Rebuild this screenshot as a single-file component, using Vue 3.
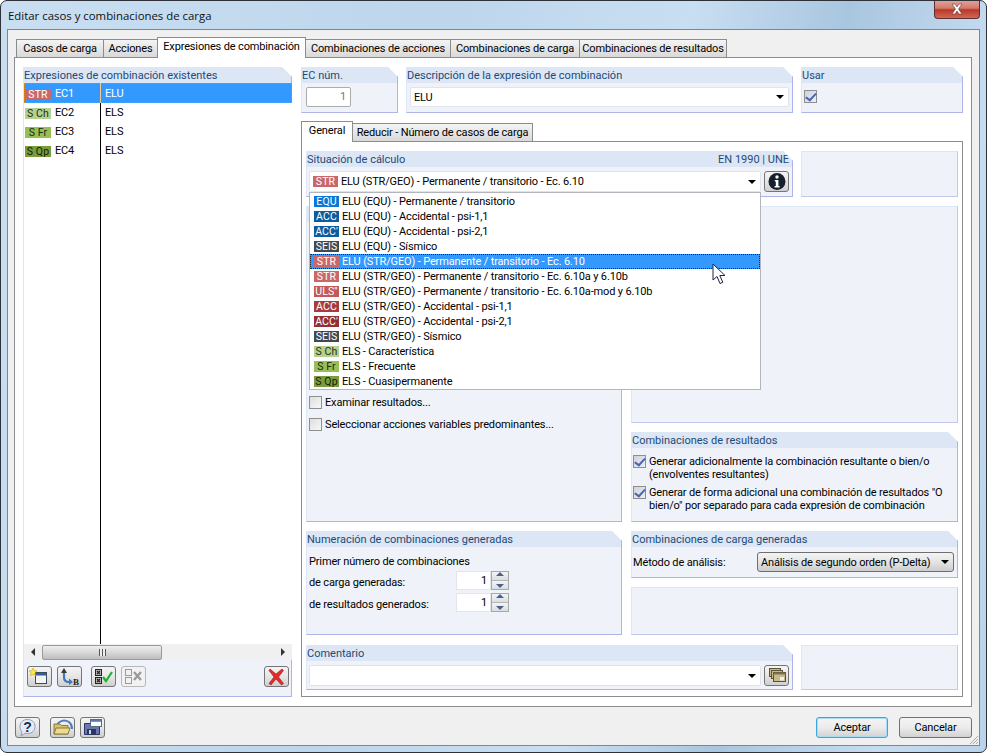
<script setup>
const tabs = ['Casos de carga', 'Acciones', 'Expresiones de combinación', 'Combinaciones de acciones', 'Combinaciones de carga', 'Combinaciones de resultados']

const expressions = [
  { tag: 'STR', cls: 'b-str', id: 'EC1', text: 'ELU', selected: true },
  { tag: 'S Ch', cls: 'b-sch', id: 'EC2', text: 'ELS' },
  { tag: 'S Fr', cls: 'b-sfr', id: 'EC3', text: 'ELS' },
  { tag: 'S Qp', cls: 'b-sqp', id: 'EC4', text: 'ELS' },
]

const situations = [
  { tag: 'EQU', cls: 'b-equ', text: 'ELU (EQU) - Permanente / transitorio' },
  { tag: 'ACC', cls: 'b-acc', text: 'ELU (EQU) - Accidental - psi-1,1' },
  { tag: "ACC'", cls: 'b-acc', text: 'ELU (EQU) - Accidental - psi-2,1' },
  { tag: 'SEIS', cls: 'b-seis', text: 'ELU (EQU) - Sísmico' },
  { tag: 'STR', cls: 'b-str', text: 'ELU (STR/GEO) - Permanente / transitorio - Ec. 6.10', selected: true },
  { tag: 'STR', cls: 'b-str', text: 'ELU (STR/GEO) - Permanente / transitorio - Ec. 6.10a y 6.10b' },
  { tag: "ULS''", cls: 'b-uls', text: 'ELU (STR/GEO) - Permanente / transitorio - Ec. 6.10a-mod y 6.10b' },
  { tag: 'ACC', cls: 'b-accr', text: 'ELU (STR/GEO) - Accidental - psi-1,1' },
  { tag: "ACC'", cls: 'b-accd', text: 'ELU (STR/GEO) - Accidental - psi-2,1' },
  { tag: 'SEIS', cls: 'b-seis', text: 'ELU (STR/GEO) - Sísmico' },
  { tag: 'S Ch', cls: 'b-sch', text: 'ELS - Característica' },
  { tag: 'S Fr', cls: 'b-sfr', text: 'ELS - Frecuente' },
  { tag: 'S Qp', cls: 'b-sqp', text: 'ELS - Cuasipermanente' },
]
</script>

<template>
  <div class="window">
    <div class="titlebar">
      <span class="title">Editar casos y combinaciones de carga</span>
      <button class="close">
        <svg width="16" height="12" viewBox="0 0 16 12">
          <path d="M3 1h3l2 3 2-3h3l-3.500 5 3.500 5h-3l-2-3-2 3h-3l3.500-5z" fill="#fff" stroke="#5a3a3a" stroke-width="0.6" />
        </svg>
      </button>
    </div>

    <div class="client">
      <div class="tabs">
        <div v-for="(t, i) in tabs" :key="t" class="tab" :class="{ active: i === 2 }">{{ t }}</div>
      </div>

      <div class="panel">
        <!-- left list -->
        <section class="group list-group">
          <div class="group-head">Expresiones de combinación existentes</div>
          <div class="list">
            <div v-for="e in expressions" :key="e.id" class="list-row" :class="{ selected: e.selected }">
              <div class="list-cell-a">
                <span class="badge" :class="e.cls">{{ e.tag }}</span>
                <span>{{ e.id }}</span>
              </div>
              <div class="list-cell-b">{{ e.text }}</div>
            </div>
          </div>
          <div class="hscroll">
            <span class="arrow-l"></span>
            <div class="thumb"><span class="grip"></span></div>
            <span class="arrow-r"></span>
          </div>
          <div class="list-tools">
            <button class="tool">
              <svg width="23" height="19" viewBox="0 0 23 19">
                <rect x="7.500" y="5.500" width="11" height="11" fill="#f2f4f6" stroke="#3d4a5a" />
                <rect x="8" y="6" width="10" height="2.500" fill="#2f5f9f" />
                <path d="M5 1l1.200 2.600 2.800.3-2.100 1.900.6 2.800L5 7.200 2.500 8.600l.6-2.800L1 3.900l2.800-.3z" fill="#ffe93c" stroke="#c8a820" stroke-width="0.6" />
              </svg>
            </button>
            <button class="tool">
              <svg width="23" height="19" viewBox="0 0 23 19">
                <path d="M6 1l-3 5h6z" fill="#3a3a3a" />
                <path d="M6 6v4c0 3 2 5 5 5h1" fill="none" stroke="#3f78c0" stroke-width="2.200" />
                <path d="M11 11.500l4 3.500-4 3z" fill="#3f78c0" />
                <text x="15" y="18" class="icon-b">B</text>
              </svg>
            </button>
            <button class="tool tool-gap">
              <svg width="23" height="19" viewBox="0 0 23 19">
                <rect x="3.500" y="2.500" width="6" height="6" fill="#b8b8b8" stroke="#222" />
                <rect x="3.500" y="10.500" width="6" height="6" fill="#b8b8b8" stroke="#222" />
                <path d="M5 4l3 3M8 4l-3 3M5 12l3 3M8 12l-3 3" stroke="#222" stroke-width="1.200" />
                <path d="M11 10l3 4 6-9" fill="none" stroke="#22b033" stroke-width="2.200" />
              </svg>
            </button>
            <button class="tool disabled">
              <svg width="23" height="19" viewBox="0 0 23 19">
                <rect x="3.500" y="2.500" width="6" height="6" fill="none" stroke="#9a9a9a" />
                <rect x="3.500" y="10.500" width="6" height="6" fill="none" stroke="#9a9a9a" />
                <path d="M12 5l7 8M19 5l-7 8" fill="none" stroke="#9a9a9a" stroke-width="2.400" />
              </svg>
            </button>
            <button class="tool tool-end">
              <svg width="23" height="19" viewBox="0 0 23 19">
                <path d="M5 2l6 5 6-5 1.500 1.500-5 6.500 5 6.500-2 1.500-5.500-6-5 6-2-1.500 5-6.500-5-6.500z" fill="#e62a2a" stroke="#8a2020" stroke-width="0.6" />
              </svg>
            </button>
          </div>
        </section>

        <!-- right side -->
        <div class="right">
          <div class="top-row">
            <section class="group">
              <div class="group-head">EC núm.</div>
              <div class="group-body"><div class="num-input">1</div></div>
            </section>
            <section class="group">
              <div class="group-head">Descripción de la expresión de combinación</div>
              <div class="group-body desc-body">
                <div class="combo">ELU<span class="caret"></span></div>
              </div>
            </section>
            <section class="group">
              <div class="group-head">Usar</div>
              <div class="group-body use-body">
                <span class="check on"></span>
              </div>
            </section>
          </div>

          <div class="inner-tabs">
            <div class="inner-tab active">General</div>
            <div class="inner-tab">Reducir - Número de casos de carga</div>
          </div>

          <div class="inner-panel">
            <div class="row-wide">
              <section class="group group-open">
                <div class="group-head head-split"><span>Situación de cálculo</span><span>EN 1990 | UNE</span></div>
                <div class="group-body combo-body">
                  <div class="combo combo-grow">
                    <span class="badge b-str">STR</span>
                    <span class="combo-text">ELU (STR/GEO) - Permanente / transitorio - Ec. 6.10</span>
                    <span class="caret"></span>
                    <ul class="dropdown">
                      <li v-for="s in situations" :key="s.text + s.tag" class="option" :class="{ selected: s.selected }">
                        <span class="badge" :class="s.cls">{{ s.tag }}</span>
                        <span>{{ s.text }}</span>
                      </li>
                    </ul>
                  </div>
                  <button class="tool info">
                    <svg width="20" height="19" viewBox="0 0 20 19">
                      <circle cx="10" cy="9.500" r="8.500" fill="#16202c" />
                      <circle cx="10" cy="5" r="1.700" fill="#fff" />
                      <path d="M7.800 8h3.600v6h1.200v1.500H7.600V14h1.200V9.500h-1z" fill="#fff" />
                    </svg>
                  </button>
                </div>
              </section>
              <div class="blank"></div>
            </div>

            <div class="row-mid">
              <section class="group options">
                <div class="group-head"></div>
                <div class="options-body">
                  <label class="check-line"><span class="check"></span>Examinar resultados...</label>
                  <label class="check-line"><span class="check"></span>Seleccionar acciones variables predominantes...</label>
                </div>
              </section>
              <div class="stack">
                <div class="blank grow"></div>
                <section class="group results">
                  <div class="group-head">Combinaciones de resultados</div>
                  <div class="results-body">
                    <div class="multi"><span class="check on"></span><span>Generar adicionalmente la combinación resultante o bien/o<br>(envolventes resultantes)</span></div>
                    <div class="multi"><span class="check on"></span><span>Generar de forma adicional una combinación de resultados "O<br>bien/o" por separado para cada expresión de combinación</span></div>
                  </div>
                </section>
              </div>
            </div>

            <div class="row-low">
              <section class="group">
                <div class="group-head">Numeración de combinaciones generadas</div>
                <div class="numbering">
                  <div class="num-line first">Primer número de combinaciones</div>
                  <div class="num-line">
                    <span>de carga generadas:</span>
                    <div class="spin"><span class="spin-val">1</span><span class="spin-btns"><i class="up"></i><i class="down"></i></span></div>
                  </div>
                  <div class="num-line">
                    <span>de resultados generados:</span>
                    <div class="spin"><span class="spin-val">1</span><span class="spin-btns"><i class="up"></i><i class="down"></i></span></div>
                  </div>
                </div>
              </section>
              <div class="stack">
                <section class="group generated">
                  <div class="group-head">Combinaciones de carga generadas</div>
                  <div class="generated-body">
                    <span>Método de análisis:</span>
                    <div class="gray-select">Análisis de segundo orden (P-Delta)<span class="caret"></span></div>
                  </div>
                </section>
                <div class="blank grow"></div>
              </div>
            </div>

            <div class="row-wide row-comment">
              <section class="group">
                <div class="group-head">Comentario</div>
                <div class="group-body combo-body">
                  <div class="combo combo-grow"><span class="caret"></span></div>
                  <button class="tool info">
                    <svg width="20" height="17" viewBox="0 0 20 17">
                      <g fill="#c8b987" stroke="#5c5238">
                        <rect x="2.500" y="1.500" width="11" height="8" />
                        <rect x="4.500" y="3.500" width="11" height="8" />
                        <rect x="6.500" y="5.500" width="12" height="9" />
                      </g>
                      <path d="M6.500 5.500h12v2h-12z" fill="#7d7350" />
                      <rect x="13" y="10" width="4" height="3.500" fill="#eef0f2" />
                    </svg>
                  </button>
                </div>
              </section>
              <div class="blank"></div>
            </div>
          </div>
        </div>
      </div>

      <div class="footer">
        <button class="tool foot-tool">
          <svg width="23" height="19" viewBox="0 0 23 19">
            <path d="M11.500 1.500c4.500 0 7.500 3 7.500 7s-3 7-7.500 7c-.8 0-1.500-.1-2.200-.3L5 18l1-4.200C4.700 12.400 4 10.600 4 8.500c0-4 3-7 7.500-7z" fill="#e4ecf7" stroke="#8b9cb8" />
            <text x="11.500" y="13.500" class="icon-q">?</text>
          </svg>
        </button>
        <button class="tool foot-tool">
          <svg width="23" height="19" viewBox="0 0 23 19">
            <path d="M6 7C8 3 13 1 18 4c2 1.500 3 4 3 7" fill="none" stroke="#4e7eb8" stroke-width="2" />
            <path d="M3 6h6l1.500 1.500H17V16H3z" fill="#d8c26a" stroke="#8a7a3c" />
            <path d="M3 16l2-6h14l-2 6z" fill="#ecdb91" stroke="#8a7a3c" />
          </svg>
        </button>
        <button class="tool foot-tool">
          <svg width="23" height="19" viewBox="0 0 23 19">
            <path d="M3.500 5.500h13l2 2v9h-15z" fill="#6a78b0" stroke="#2c3560" />
            <rect x="6" y="11" width="9" height="5.500" fill="#2c3560" />
            <rect x="8" y="12" width="2" height="4" fill="#cfd6e6" />
            <rect x="9.500" y="1.500" width="11" height="7" fill="#fff" stroke="#5a6a8a" />
            <rect x="10" y="2" width="10" height="1.800" fill="#5a7ab0" />
          </svg>
        </button>
        <div class="foot-spacer"></div>
        <button class="dlg-btn default">Aceptar</button>
        <button class="dlg-btn">Cancelar</button>
      </div>
      <svg class="grip-corner" width="11" height="11" viewBox="0 0 11 11">
        <path d="M10 2L2 10M10 5L5 10M10 8L8 10" stroke="#a8a8a8" stroke-width="1" />
      </svg>
    </div>

    <svg class="cursor" width="14" height="22" viewBox="0 0 14 22">
      <path d="M1 1v16l4-3.500 3 7 2.800-1.200-3-6.800h5.200z" fill="#fff" stroke="#1c2240" stroke-width="1" />
    </svg>
  </div>
</template>

<style scoped>
.window {
  position: relative;
  box-sizing: border-box;
  width: 987px;
  height: 753px;
  display: flex;
  flex-direction: column;
  padding: 0 6px 6px;
  border: 1px solid #2e3238;
  border-radius: 7px;
  background: linear-gradient(100deg, #c9def1 0%, #bdd6ec 40%, #c8def2 62%, #a9c6e0 76%, #c6dcf1 90%, #b9d3ea 100%);
  font-family: Roboto, "Liberation Sans", Arial, sans-serif;
  font-size: 11px;
  letter-spacing: -0.15px;
  color: #000;
  overflow: hidden;
}

.titlebar {
  height: 28px;
  flex: none;
  display: flex;
  justify-content: space-between;
}

.title {
  font-family: "Open Sans", "Liberation Sans", sans-serif;
  font-size: 11.400px;
  letter-spacing: 0;
  padding-left: 1px;
  line-height: 29px;
  color: #111;
}

.close {
  width: 46px;
  height: 19px;
  margin: -1px 0 0;
  padding: 0;
  display: flex;
  align-items: center;
  justify-content: center;
  border: 1px solid #5e3030;
  border-top: none;
  border-radius: 0 0 4px 4px;
  background: linear-gradient(#e2a59c 0%, #d47a6c 45%, #b8382a 55%, #cf6a52 100%);
}

.client {
  position: relative;
  flex: 1;
  min-height: 0;
  display: flex;
  flex-direction: column;
  padding: 7px 7px 0 6px;
  background: #f0f0f0;
  border: 1px solid #7c8794;
}

.tabs {
  display: grid;
  grid-template-columns: 87px 54px 148px 145px 129px 147px;
  justify-content: start;
  height: 20px;
  padding-left: 2px;
  align-items: end;
  position: relative;
  z-index: 1;
}

.tab {
  box-sizing: border-box;
  height: 18px;
  line-height: 18px;
  text-align: center;
  white-space: nowrap;
  border: 1px solid #8c8c8c;
  border-bottom: none;
  margin-right: -1px;
  background: linear-gradient(#f4f4f4, #d9d9d9);
}

.tab.active {
  height: 21px;
  margin-bottom: -1px;
  line-height: 18px;
  padding-bottom: 3px;
  background: #fff;
  position: relative;
  z-index: 2;
}

.panel {
  flex: none;
  box-sizing: border-box;
  height: 650px;
  display: grid;
  grid-template-columns: 269px 662px;
  gap: 9px;
  padding: 9px 7px 10px 8px;
  background: #fff;
  border: 1px solid #8c8c8c;
}

/* titled boxes with the cut corner; the box itself is a pseudo so the dropdown is not clipped */
.group {
  position: relative;
  isolation: isolate;
  box-sizing: border-box;
  display: flex;
  flex-direction: column;
  min-width: 0;
  padding: 0 1px 1px;
}

.group::before {
  content: "";
  position: absolute;
  inset: 0;
  z-index: -1;
  box-sizing: border-box;
  background: #eff3f9;
  border-left: 1px solid #dce6f4;
  border-right: 1px solid #aeb4e8;
  border-bottom: 1px solid #aeb4e8;
  clip-path: polygon(0 0, calc(100% - 10px) 0, 100% 10px, 100% 100%, 0 100%);
}

.group-open {
  z-index: 3;
}

.group-head {
  flex: none;
  height: 16px;
  line-height: 17px;
  padding: 0 4px 0 1px;
  margin: 0 -1px;
  background: #dce6f4;
  color: #1d4a78;
  letter-spacing: 0;
  white-space: nowrap;
  box-shadow: inset -1px 0 0 #aeb4e8;
  clip-path: polygon(0 0, calc(100% - 10px) 0, 100% 10px, 100% 100%, 0 100%);
}

.head-split {
  display: flex;
  justify-content: space-between;
}

.group-body {
  flex: 1;
  padding: 4px 3px;
}

.blank {
  box-sizing: border-box;
  background: #eff3f9;
  border: 1px solid #dce6f4;
  border-right-color: #c3c8ee;
  border-bottom-color: #c3c8ee;
}

.grow {
  flex: 1;
}

.badge {
  display: inline-block;
  box-sizing: border-box;
  width: 25px;
  height: 11px;
  line-height: 11px;
  margin-right: 3px;
  font-size: 10.500px;
  letter-spacing: 0.1px;
  text-align: center;
  white-space: nowrap;
  color: #fff;
  flex: none;
}

.b-str { background: #c9686b; }
.b-equ { background: #0a78d8; }
.b-acc { background: #0d5c9e; }
.b-seis { background: #42494f; }
.b-uls { background: #c25a5a; }
.b-accr { background: #a63c40; }
.b-accd { background: #923037; }
.b-sch { background: #b6d18f; color: #243018; }
.b-sfr { background: #97bf55; color: #1d2a0c; }
.b-sqp { background: #7b9c3c; color: #141d06; }

/* left list */
.list {
  flex: 1;
  min-height: 0;
  margin-right: -1px;
  background: linear-gradient(#000, #000) 76px 0 / 1px 100% no-repeat #fff;
}

.list-row {
  display: flex;
  height: 19px;
  line-height: 20px;
}

.list-row.selected {
  box-sizing: border-box;
  height: 20px;
  line-height: 22px;
  background: #3399ff;
  color: #fff;
  outline: 1px dotted #d98a20;
  outline-offset: -1px;
}

.list-cell-a {
  width: 76px;
  height: 20px;
  flex: none;
  display: flex;
  align-items: center;
  padding-left: 1px;
  box-sizing: border-box;
}

.selected .list-cell-a {
  height: 22px;
}

.list-cell-a .badge {
  width: 26px;
  margin-right: 4px;
}

.list-cell-b {
  padding-left: 4px;
  border-left: 1px solid transparent;
}

.list-row.selected .list-cell-b {
  border-left-color: #f0c890;
}

.hscroll {
  flex: none;
  height: 16px;
  margin-right: -1px;
  display: flex;
  align-items: center;
  background: #f0f0f0;
}

.arrow-l {
  margin-left: 7px;
  border: 4px solid transparent;
  border-left: none;
  border-right-color: #333;
}

.arrow-r {
  margin-left: auto;
  margin-right: 7px;
  border: 4px solid transparent;
  border-right: none;
  border-left-color: #333;
}

.thumb {
  box-sizing: border-box;
  width: 120px;
  height: 15px;
  margin-left: 7px;
  display: flex;
  align-items: center;
  justify-content: center;
  border: 1px solid #9a9a9a;
  border-radius: 2px;
  background: linear-gradient(#eeeeee, #d8d8d8 50%, #bdbdbd);
}

.grip {
  width: 7px;
  height: 7px;
  background: repeating-linear-gradient(90deg, #555 0 1px, #eee 1px 3px);
}

.list-tools {
  flex: none;
  height: 30px;
  display: flex;
  align-items: flex-start;
  gap: 5px;
  padding: 6px 2px 0 3px;
}

.tool {
  box-sizing: border-box;
  flex: none;
  width: 25px;
  height: 21px;
  padding: 0;
  display: flex;
  align-items: center;
  justify-content: center;
  border: 1px solid #757575;
  border-radius: 3px;
  background: linear-gradient(#f4f4f4, #e6e6e6 50%, #cfcfcf);
}

.tool.disabled {
  border-color: #b8b8b8;
  background: #f2f2f2;
}

.tool-gap {
  margin-left: 4px;
}

.tool-end {
  margin-left: auto;
}

.icon-b {
  font-family: "Liberation Serif", serif;
  font-size: 9px;
  font-weight: bold;
  fill: #222;
}

.icon-q {
  font-family: "Liberation Sans", sans-serif;
  font-size: 14px;
  font-weight: bold;
  text-anchor: middle;
  fill: #1d2b55;
}

/* right column */
.right {
  display: flex;
  flex-direction: column;
  min-width: 0;
}

.top-row {
  flex: none;
  display: grid;
  grid-template-columns: 97px 387px 162px;
  gap: 8px;
  height: 46px;
}

.num-input {
  box-sizing: border-box;
  width: 45px;
  height: 20px;
  margin-left: 1px;
  line-height: 18px;
  padding-right: 4px;
  text-align: right;
  color: #777;
  background: #fff;
  border: 1px solid #ababab;
  border-radius: 2px;
}

.desc-body {
  padding: 4px 3px 0;
}

.use-body {
  padding: 7px 2px 0;
}

.combo {
  position: relative;
  box-sizing: border-box;
  height: 20px;
  line-height: 19px;
  padding-left: 3px;
  display: flex;
  align-items: center;
  background: #fff;
  border: 1px solid #dfe3ea;
  border-radius: 2px;
}

.caret {
  margin-left: auto;
  margin-right: 4px;
  width: 0;
  height: 0;
  border: 4px solid transparent;
  border-top: 4px solid #000;
  border-bottom: none;
  flex: none;
}

.check {
  box-sizing: border-box;
  display: inline-block;
  position: relative;
  flex: none;
  width: 13px;
  height: 13px;
  border: 1px solid #8e8f8f;
  background: linear-gradient(135deg, #dedede, #f8f8f8);
}

.check.on {
  background: linear-gradient(135deg, #cfd3da, #eceef2);
}

.check.on::after {
  content: "";
  position: absolute;
  left: 3px;
  top: 0;
  width: 4px;
  height: 8px;
  border-right: 2px solid #4a64b4;
  border-bottom: 2px solid #4a64b4;
  transform: rotate(35deg) skewX(-8deg);
}

.inner-tabs {
  flex: none;
  display: flex;
  align-items: flex-end;
  height: 20px;
  margin-top: 8px;
  position: relative;
  z-index: 1;
}

.inner-tab {
  box-sizing: border-box;
  height: 18px;
  line-height: 18px;
  padding: 0 3px;
  width: 181px;
  text-align: center;
  white-space: nowrap;
  border: 1px solid #8c8c8c;
  border-bottom: none;
  background: linear-gradient(#f4f4f4, #d9d9d9);
}

.inner-tab.active {
  width: 52px;
  height: 21px;
  margin-bottom: -1px;
  margin-right: -1px;
  line-height: 18px;
  padding-bottom: 3px;
  background: #fff;
}

.inner-panel {
  flex: 1;
  min-height: 0;
  box-sizing: border-box;
  display: flex;
  flex-direction: column;
  gap: 9px;
  padding: 9px 4px 6px 4px;
  border: 1px solid #8c8c8c;
}

.row-wide {
  flex: none;
  height: 46px;
  display: grid;
  grid-template-columns: 487px 157px;
  gap: 8px;
}

.row-comment {
  height: 45px;
  margin-top: 1px;
}

.combo-body {
  display: flex;
  gap: 3px;
  padding: 4px 3px 0 2px;
}

.combo-grow {
  flex: 1;
  height: 21px;
}

.combo-text {
  white-space: nowrap;
}

.info {
  width: 25px;
}

.dropdown {
  position: absolute;
  left: -1px;
  right: -1px;
  top: 20px;
  z-index: 5;
  margin: 0;
  padding: 1px 0 0;
  list-style: none;
  background: #fff;
  border: 1px solid #b4b4bc;
}

.option {
  display: flex;
  align-items: center;
  height: 15px;
  padding-left: 4px;
  white-space: nowrap;
}

.option.selected {
  background: #3399ff;
  color: #fff;
  outline: 1px dotted #222;
  outline-offset: -1px;
}

.row-mid {
  flex: none;
  height: 316px;
  display: grid;
  grid-template-columns: 316px 327px;
  gap: 9px;
}

.stack {
  display: flex;
  flex-direction: column;
  gap: 9px;
  min-width: 0;
}

.options-body {
  padding: 174px 2px 0;
  display: flex;
  flex-direction: column;
  gap: 9px;
}

.check-line {
  display: flex;
  align-items: center;
  gap: 3px;
  height: 13px;
}

.results {
  flex: none;
  height: 90px;
}

.results-body {
  padding: 7px 1px 0;
  display: flex;
  flex-direction: column;
  gap: 5px;
  line-height: 13px;
}

.multi {
  display: flex;
  gap: 3px;
  white-space: nowrap;
}

.row-low {
  flex: none;
  height: 104px;
  display: grid;
  grid-template-columns: 316px 327px;
  gap: 9px;
}

.numbering {
  padding: 4px 2px 0;
}

.num-line {
  display: flex;
  align-items: center;
  justify-content: space-between;
  width: 199px;
  height: 22px;
  white-space: nowrap;
}

.num-line.first {
  height: 20px;
}

.spin {
  display: flex;
  align-self: flex-start;
  height: 19px;
  flex: none;
  margin-right: -1px;
}

.spin-val {
  box-sizing: border-box;
  width: 35px;
  line-height: 18px;
  text-align: right;
  padding-right: 3px;
  background: #fff;
  border: 1px solid #e2e5ea;
}

.spin-btns {
  box-sizing: border-box;
  width: 18px;
  display: flex;
  flex-direction: column;
  border: 1px solid #a8a8a8;
}

.spin-btns i {
  flex: 1;
  position: relative;
  background: linear-gradient(#f4f4f4, #d8dee6);
}

.spin-btns i::after {
  content: "";
  position: absolute;
  left: 4px;
  width: 0;
  height: 0;
  border: 4px solid transparent;
}

.spin-btns .up {
  border-bottom: 1px solid #b4b4b4;
}

.spin-btns .up::after {
  top: 0;
  border-top: none;
  border-bottom-color: #4d6185;
}

.spin-btns .down::after {
  top: 3px;
  border-bottom: none;
  border-top-color: #4d6185;
}

.generated {
  flex: none;
  height: 47px;
}

.generated-body {
  display: flex;
  align-items: center;
  justify-content: space-between;
  padding: 5px 3px 0 1px;
}

.gray-select {
  box-sizing: border-box;
  width: 197px;
  height: 20px;
  padding-left: 3px;
  display: flex;
  align-items: center;
  white-space: nowrap;
  border: 1px solid #6f6f6f;
  border-radius: 3px;
  background: linear-gradient(#f4f4f4, #e4e4e4 50%, #cccccc);
}

.footer {
  flex: 1;
  display: flex;
  align-items: flex-start;
  gap: 5px;
  padding: 10px 0 0 1px;
}

.foot-tool:nth-child(2) {
  margin-left: 5px;
}

.foot-spacer {
  flex: 1;
}

.dlg-btn {
  box-sizing: border-box;
  height: 21px;
  width: 73px;
  padding: 0;
  margin-left: 6px;
  font: inherit;
  letter-spacing: inherit;
  border: 1px solid #707070;
  border-radius: 3px;
  background: linear-gradient(#f4f4f4, #ebebeb 50%, #d2d2d2);
}

.dlg-btn.default {
  width: 72px;
  border-color: #3aa6dc;
  box-shadow: inset 0 0 0 1px #a8dcf4;
}

.grip-corner {
  position: absolute;
  right: 0;
  bottom: 0;
}

.cursor {
  position: absolute;
  left: 711px;
  top: 262px;
  z-index: 9;
}
</style>

<style>
html,
body {
  margin: 0;
  background: #fff;
  overflow: hidden;
}
</style>
